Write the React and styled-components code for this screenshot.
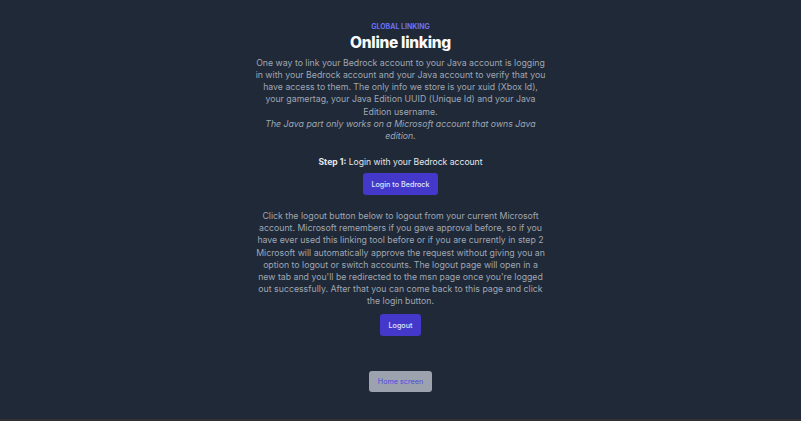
import React from "react";
import styled, { createGlobalStyle } from "styled-components";

const GlobalStyle = createGlobalStyle`
  html, body {
    margin: 0;
    padding: 0;
    background: #1f2937;
    font-family: Inter, "Noto Sans", sans-serif;
  }
`;

export default function App() {
  return (
    <>
      <GlobalStyle />
      <Page>
        <Main>
          <Eyebrow>Global linking</Eyebrow>
          <Title>Online linking</Title>
          <Text $top={3}>
            One way to link your Bedrock account to your Java account is logging
            in with your Bedrock account and your Java account to verify that you
            have access to them. The only info we store is your xuid (Xbox Id),
            your gamertag, your Java Edition UUID (Unique Id) and your Java
            Edition username.
            <br />
            <Note>
              The Java part only works on a Microsoft account that owns Java
              edition.
            </Note>
          </Text>
          <Step>
            <b>Step 1:</b> Login with your Bedrock account
          </Step>
          <Button $top={5}>Login to Bedrock</Button>
          <Text $top={15}>
            Click the logout button below to logout from your current Microsoft
            account. Microsoft remembers if you gave approval before, so if you
            have ever used this linking tool before or if you are currently in
            step 2 Microsoft will automatically approve the request without
            giving you an option to logout or switch accounts. The logout page
            will open in a new tab and you'll be redirected to the msn page once
            you're logged out successfully. After that you can come back to this
            page and click the login button.
          </Text>
          <Button $top={7}>Logout</Button>
          <HomeButton>Home screen</HomeButton>
        </Main>
        <Footer />
      </Page>
    </>
  );
}

const Page = styled.div`
  min-height: 100vh;
  display: flex;
  flex-direction: column;
`;

const Main = styled.main`
  flex: 1;
  display: flex;
  flex-direction: column;
  align-items: center;
  padding-top: 22px;
  text-align: center;
`;

const Eyebrow = styled.div`
  color: #6d70f2;
  font-size: 7px;
  line-height: 10px;
  font-weight: 700;
  text-transform: uppercase;
`;

const Title = styled.h1`
  margin: 0;
  color: #f9fafb;
  font-size: 15.5px;
  line-height: 22px;
  font-weight: 800;
  letter-spacing: -0.02em;
`;

const Text = styled.p`
  margin: ${(p) => p.$top}px 0 0;
  width: 292px;
  color: #a0a7b3;
  font-size: 8.75px;
  line-height: 12.15px;
`;

const Note = styled.i`
  font-style: italic;
`;

const Step = styled.p`
  margin: 14px 0 0;
  color: #e5e7eb;
  font-size: 8.6px;
  line-height: 12px;

  b {
    font-weight: 700;
  }
`;

const Button = styled.button`
  flex-shrink: 0;
  margin-top: ${(p) => p.$top}px;
  height: 22px;
  padding: 0 8.5px;
  border: none;
  border-radius: 3px;
  background: #4338ca;
  color: #e0e7ff;
  font-family: inherit;
  font-size: 7.2px;
  font-weight: 500;
`;

const HomeButton = styled(Button)`
  margin-top: 35px;
  height: 21px;
  background: #9ca3af;
  color: #5048e0;
  font-weight: 400;
`;

const Footer = styled.div`
  flex-shrink: 0;
  height: 2px;
  background: #303030;
`;
